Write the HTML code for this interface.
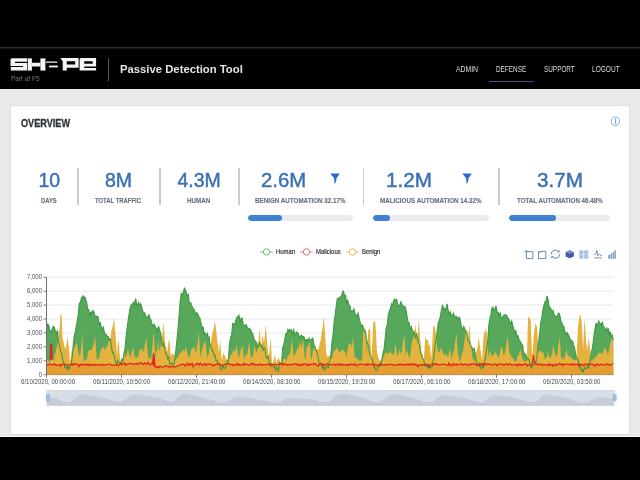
<!DOCTYPE html>
<html><head><meta charset="utf-8">
<style>
*{margin:0;padding:0;box-sizing:border-box}
html,body{width:640px;height:480px;overflow:hidden;background:#000;font-family:"Liberation Sans",sans-serif}
.a{position:absolute;white-space:nowrap;line-height:1}
#topline{position:absolute;left:0;top:47px;width:640px;height:1px;background:#2e2f33}
#topline2{position:absolute;left:0;top:48px;width:640px;height:1px;background:#161618}
#gray{position:absolute;left:0;top:89px;width:640px;height:348px;background:#e9e9e9}
#bline{position:absolute;left:0;top:436px;width:640px;height:1px;background:#f6f6f6}
#card{position:absolute;left:10px;top:105px;width:620px;height:330px;background:#fff;border:1px solid #dde1e8;border-radius:2px}
.num{color:#3b70b6;font-size:19.5px;-webkit-text-stroke:0.45px #3b70b6}
.lbl{color:#657080;font-size:6.6px;font-weight:bold;-webkit-text-stroke:0.12px #657080}
.div{position:absolute;top:168px;width:1.5px;height:36.5px;background:#cccccc}
.bar{position:absolute;top:215px;height:6px;border-radius:3px;background:#e9ecef;overflow:hidden}
.bar i{position:absolute;left:0;top:0;bottom:0;background:#3f80d2;border-radius:3px}
.nav{color:#dcdcdc;font-size:8.3px}
.ylab{color:#4c4f57;font-size:7px;text-align:right;width:30px;transform:scaleX(0.86);transform-origin:100% 0}
.xlab{color:#45484f;font-size:7.2px;transform:scaleX(0.846);transform-origin:0 0}
.leg{color:#262626;font-size:6.8px;-webkit-text-stroke:0.15px #262626;transform:scaleX(0.87);transform-origin:0 0}
</style></head><body><div id="wrap" style="position:absolute;left:0;top:0;width:640px;height:480px;filter:blur(0.3px)">
<div id="topline"></div><div id="topline2"></div>
<!-- header -->
<svg class="a" style="left:0;top:0" width="640" height="89">
  <g fill="#f4f4f4" id="logo">
<path d="M12 58.25H27.2V61.8H15V62.9H27.2V70.5H10.8V67H23V65.9H10.5V59.75Q10.5 58.25 12 58.25Z"/>
<rect x="27.8" y="58.4" width="4.1" height="12.2"/>
<rect x="31.9" y="62.75" width="8.5" height="3.75"/>
<rect x="40.4" y="58.4" width="5" height="12.2"/>
<rect x="46" y="61.5" width="11.25" height="1.25"/>
<rect x="49.1" y="65.6" width="8.8" height="1.8"/>
<path d="M60.2 58.1H78.6V67.75H66.75V70.6H62.7V61.2Q61.5 59.5 60.2 58.1Z M66.75 61.2V64.6H75.2V61.2Z" fill-rule="evenodd"/>
<path d="M81.2 58.1H96.1V66.5H84.25V68.1H96.1V70.6H79.6V59.7Q79.6 58.1 81.2 58.1Z M84.25 61.2V63.7H92.7V61.2Z" fill-rule="evenodd"/>
</g>
</svg>
<div class="a" style="left:11px;top:74.5px;font-size:7.4px;color:#7c7c7c;transform:scaleX(0.88);transform-origin:0 0">Part of F5</div>
<div class="a" style="left:108px;top:58px;width:1px;height:23px;background:#5a5a5a"></div>
<div class="a" style="left:120px;top:62.8px;font-size:11.6px;font-weight:bold;color:#e4e4e4;transform:scaleX(0.974);transform-origin:0 0">Passive Detection Tool</div>
<div class="a nav" style="left:456px;top:65px;transform:scaleX(0.825);transform-origin:0 0">ADMIN</div>
<div class="a nav" style="left:496.4px;top:65px;transform:scaleX(0.77);transform-origin:0 0">DEFENSE</div>
<div class="a nav" style="left:544px;top:65px;transform:scaleX(0.77);transform-origin:0 0">SUPPORT</div>
<div class="a nav" style="left:592.4px;top:65px;transform:scaleX(0.79);transform-origin:0 0">LOGOUT</div>
<div class="a" style="left:488.7px;top:80.5px;width:45.7px;height:1.8px;background:#44528a"></div>

<div id="gray"></div><div id="bline"></div>
<div id="card"></div>
<div class="a" style="left:21.3px;top:117.9px;font-size:10.5px;font-weight:bold;color:#2f343a;-webkit-text-stroke:0.3px #2f343a;transform:scaleX(0.87);transform-origin:0 0">OVERVIEW</div>
<svg class="a" style="left:609px;top:115px" width="13" height="13"><circle cx="6.4" cy="6.25" r="4.2" fill="none" stroke="#7aaee0" stroke-width="1"/><line x1="6.4" y1="3.6" x2="6.4" y2="9" stroke="#6a9fd8" stroke-width="1"/></svg>

<!-- KPIs -->
<div class="a num" style="left:38.5px;top:171px">10</div>
<div class="a lbl" style="left:41.4px;top:198px;transform:scaleX(0.89);transform-origin:0 0">DAYS</div>
<div class="div" style="left:77px"></div>
<div class="a num" style="left:105px;top:171px">8M</div>
<div class="a lbl" style="left:95.4px;top:198px;transform:scaleX(0.896);transform-origin:0 0">TOTAL TRAFFIC</div>
<div class="div" style="left:159px"></div>
<div class="a num" style="left:177.5px;top:171px">4.3M</div>
<div class="a lbl" style="left:187.2px;top:198px;transform:scaleX(0.944);transform-origin:0 0">HUMAN</div>
<div class="div" style="left:238px"></div>
<div class="a num" style="left:260.5px;top:171px;transform:scaleX(1.04);transform-origin:0 0">2.6M</div>
<div class="a lbl" style="left:255px;top:198px;transform:scaleX(0.948);transform-origin:0 0">BENIGN AUTOMATION 32.17%</div>
<div class="div" style="left:362.5px"></div>
<div class="a num" style="left:386px;top:171px;transform:scaleX(1.06);transform-origin:0 0">1.2M</div>
<div class="a lbl" style="left:379.5px;top:198px;transform:scaleX(0.95);transform-origin:0 0">MALICIOUS AUTOMATION 14.32%</div>
<div class="div" style="left:498.2px"></div>
<div class="a num" style="left:536.5px;top:171px;transform:scaleX(1.06);transform-origin:0 0">3.7M</div>
<div class="a lbl" style="left:516.5px;top:198px;transform:scaleX(0.94);transform-origin:0 0">TOTAL AUTOMATION 46.48%</div>
<svg class="a" style="left:330px;top:173px" width="11" height="12"><path d="M0.3 0.4H9.8L6.5 5.2L6.1 8.8L4.6 10.9L4.1 5.2Z" fill="#2d69cc"/></svg>
<svg class="a" style="left:462.4px;top:173px" width="11" height="12"><path d="M0.3 0.4H9.8L6.5 5.2L6.1 8.8L4.6 10.9L4.1 5.2Z" fill="#2d69cc"/></svg>
<div class="bar" style="left:248px;width:105px"><i style="width:34px"></i></div>
<div class="bar" style="left:373px;width:116px"><i style="width:16.5px"></i></div>
<div class="bar" style="left:508.5px;width:101px"><i style="width:47px"></i></div>

<!-- chart -->
<svg class="a" style="left:0;top:0" width="640" height="480" id="chart">
<line x1="46.5" y1="360.82" x2="613.5" y2="360.82" stroke="#e4e6e9" stroke-width="0.9"/>
<line x1="46.5" y1="346.89" x2="613.5" y2="346.89" stroke="#e4e6e9" stroke-width="0.9"/>
<line x1="46.5" y1="332.96" x2="613.5" y2="332.96" stroke="#e4e6e9" stroke-width="0.9"/>
<line x1="46.5" y1="319.03" x2="613.5" y2="319.03" stroke="#e4e6e9" stroke-width="0.9"/>
<line x1="46.5" y1="305.10" x2="613.5" y2="305.10" stroke="#e4e6e9" stroke-width="0.9"/>
<line x1="46.5" y1="291.17" x2="613.5" y2="291.17" stroke="#e4e6e9" stroke-width="0.9"/>
<line x1="46.5" y1="277.24" x2="613.5" y2="277.24" stroke="#e4e6e9" stroke-width="0.9"/>
<polygon points="46.50,374.75 46.50,321.68 47.30,325.60 48.10,324.56 49.15,326.67 50.20,331.31 51.23,332.59 52.25,328.81 53.27,326.37 54.30,327.61 55.35,330.58 56.40,334.08 57.50,330.24 58.50,342.08 59.55,346.48 60.60,351.37 61.65,353.82 62.70,359.36 63.73,362.29 64.77,367.28 65.80,366.55 66.83,368.83 67.87,365.48 68.90,369.36 69.95,367.01 71.00,364.66 72.00,359.31 73.10,346.49 74.15,336.93 75.20,332.17 76.22,326.85 77.25,320.78 78.28,314.53 79.30,302.90 80.35,302.75 81.40,297.69 82.25,299.18 83.10,296.00 84.15,296.78 85.20,297.73 86.60,301.96 87.70,309.55 88.72,309.62 89.75,316.45 90.78,312.22 91.80,313.60 92.60,310.53 93.40,311.31 94.20,312.76 95.00,316.05 96.00,316.55 97.00,316.19 98.05,317.07 99.10,324.32 100.15,322.56 101.20,326.47 102.25,329.47 103.30,327.21 104.20,331.33 105.10,334.41 106.00,334.24 107.15,336.18 108.30,336.54 109.35,339.39 110.40,338.90 111.45,346.67 112.50,353.06 113.53,352.80 114.57,357.62 115.60,361.86 116.65,364.66 117.70,360.31 118.75,362.58 119.80,363.29 120.85,363.15 121.90,358.88 122.95,361.75 124.00,353.54 125.00,348.85 126.00,338.19 127.05,328.93 128.10,320.89 129.15,313.87 130.20,307.56 131.23,304.75 132.27,304.72 133.30,302.59 134.14,308.41 134.98,301.07 135.82,298.51 136.66,305.79 137.50,304.46 138.53,302.46 139.57,305.77 140.60,303.72 141.65,306.62 142.70,311.08 143.75,313.31 144.80,312.74 145.85,317.68 146.90,317.05 147.93,316.63 148.97,314.84 150.00,318.02 151.00,320.32 152.00,323.92 153.07,326.24 154.13,324.32 155.20,326.56 156.04,328.36 156.88,328.33 157.72,332.79 158.56,325.98 159.40,329.94 160.45,332.08 161.50,338.43 162.53,346.80 163.57,342.47 164.60,348.51 165.63,353.04 166.67,354.73 167.70,359.03 168.73,357.16 169.77,364.71 170.80,363.85 171.87,362.66 172.93,365.32 174.00,364.45 175.00,355.93 176.00,349.51 177.05,339.17 178.10,328.03 179.15,315.23 180.20,301.14 181.25,293.52 182.30,295.22 183.35,292.03 184.40,288.30 185.43,289.75 186.47,293.47 187.50,296.06 188.34,294.50 189.18,302.84 190.02,302.68 190.86,302.95 191.70,305.90 192.52,306.91 193.34,309.72 194.16,309.25 194.98,312.58 195.80,314.36 196.64,312.52 197.48,313.92 198.32,314.78 199.16,317.68 200.00,318.41 200.84,322.30 201.68,325.36 202.52,328.30 203.36,327.60 204.20,334.33 205.02,332.94 205.84,334.57 206.66,335.06 207.48,333.50 208.30,339.01 209.14,337.28 209.98,344.82 210.82,344.90 211.66,349.87 212.50,350.25 213.33,352.42 214.17,355.81 215.00,355.15 216.03,360.90 217.07,360.52 218.10,364.01 219.15,363.98 220.20,368.02 221.25,369.99 222.08,367.57 222.91,365.90 223.74,368.05 224.57,368.72 225.40,367.42 226.43,363.08 227.47,360.76 228.50,358.82 229.55,343.96 230.60,337.41 231.65,334.99 232.70,323.59 233.75,323.51 234.80,325.01 235.85,320.06 236.90,317.36 237.95,316.39 239.00,315.21 240.03,323.16 241.07,318.29 242.10,318.17 243.15,323.97 244.20,325.55 245.23,325.46 246.27,324.60 247.30,327.73 248.14,328.59 248.98,328.44 249.82,328.93 250.66,329.52 251.50,332.04 252.53,333.23 253.57,337.20 254.60,340.43 255.63,341.20 256.67,342.72 257.70,347.71 258.54,346.41 259.38,342.79 260.22,344.64 261.06,346.77 261.90,345.15 262.93,350.31 263.97,347.63 265.00,349.40 266.03,356.97 267.07,358.31 268.10,356.28 269.15,361.55 270.20,366.05 271.25,363.50 272.08,364.40 272.91,365.39 273.74,366.87 274.57,366.49 275.40,369.89 276.43,367.03 277.47,368.86 278.50,371.93 279.57,362.92 280.63,363.82 281.70,361.52 282.73,347.66 283.75,344.96 284.77,339.51 285.80,333.67 286.85,333.77 287.90,329.37 288.74,331.07 289.58,329.87 290.42,330.55 291.26,329.52 292.10,335.51 292.93,331.31 293.76,329.51 294.59,335.52 295.42,335.03 296.25,331.88 297.30,332.40 298.35,333.63 299.40,338.74 300.43,335.78 301.47,335.06 302.50,338.00 303.34,336.31 304.18,337.14 305.02,341.33 305.86,339.72 306.70,340.86 307.52,339.29 308.34,340.94 309.16,338.18 309.98,340.33 310.80,340.49 311.85,338.77 312.90,338.17 313.95,344.72 315.00,346.58 315.84,350.45 316.68,350.67 317.52,355.30 318.36,358.62 319.20,363.78 320.02,364.14 320.84,362.96 321.66,366.40 322.48,363.96 323.30,368.83 324.14,367.09 324.98,369.56 325.82,367.89 326.66,367.05 327.50,366.36 328.33,367.28 329.17,362.21 330.00,360.65 331.05,352.94 332.10,340.89 333.15,334.42 334.20,321.10 335.23,314.25 336.25,306.12 337.27,298.64 338.30,298.31 339.37,297.41 340.43,296.87 341.50,296.53 342.50,291.89 343.50,291.17 344.55,296.43 345.60,295.44 346.65,303.78 347.70,299.85 348.75,305.49 349.80,305.38 350.85,310.77 351.90,311.27 352.93,310.64 353.97,308.89 355.00,313.75 356.03,314.82 357.07,315.93 358.10,313.22 359.15,318.24 360.20,322.53 361.23,325.87 362.27,325.03 363.30,327.78 364.35,331.88 365.40,331.46 366.45,340.02 367.50,343.26 368.53,346.40 369.57,353.11 370.60,356.14 371.65,358.13 372.70,361.02 373.75,365.52 374.80,367.64 375.85,370.53 376.90,370.26 377.72,367.33 378.54,364.74 379.36,366.49 380.18,365.50 381.00,365.64 382.05,358.36 383.10,352.76 384.15,348.43 385.20,338.18 386.23,327.87 387.27,324.97 388.30,315.18 389.37,310.86 390.43,308.50 391.50,303.80 392.53,305.34 393.57,300.92 394.60,299.15 395.63,300.11 396.67,299.19 397.70,303.95 398.73,306.22 399.77,305.58 400.80,301.32 401.87,305.31 402.93,305.37 404.00,307.96 405.03,306.69 406.07,310.15 407.10,316.84 408.13,322.32 409.17,322.88 410.20,330.17 411.23,326.49 412.27,330.24 413.30,331.98 414.37,332.07 415.43,337.12 416.50,333.91 417.53,337.88 418.57,342.65 419.60,345.90 420.65,353.14 421.70,354.21 422.73,358.92 423.77,359.86 424.80,365.92 425.83,364.87 426.87,366.80 427.90,364.62 428.74,368.62 429.58,365.65 430.42,368.12 431.26,366.98 432.10,366.63 433.13,361.46 434.17,353.78 435.20,345.15 436.25,338.80 437.30,330.53 438.33,322.42 439.37,320.23 440.40,316.27 441.45,309.81 442.50,305.42 443.33,307.44 444.17,310.01 445.00,308.29 446.05,309.05 447.10,303.80 448.15,310.36 449.20,314.48 450.23,311.78 451.27,316.15 452.30,316.01 453.33,313.16 454.37,316.15 455.40,316.52 456.24,316.43 457.08,319.31 457.92,317.44 458.76,319.44 459.60,317.70 460.63,322.00 461.67,328.70 462.70,328.78 463.73,326.49 464.77,329.06 465.80,331.99 466.87,331.97 467.93,339.66 469.00,340.52 470.03,343.27 471.07,346.30 472.10,347.71 473.13,349.60 474.17,348.64 475.20,354.20 476.23,360.48 477.27,364.11 478.30,365.25 479.37,363.17 480.43,367.03 481.50,368.77 482.53,364.53 483.57,367.82 484.60,361.39 485.65,357.25 486.70,348.95 487.73,341.21 488.75,325.62 489.77,319.06 490.80,315.60 491.85,308.53 492.90,307.28 493.93,309.65 494.97,309.64 496.00,306.00 497.07,312.17 498.13,312.21 499.20,316.80 500.23,312.30 501.27,318.08 502.30,318.46 503.33,315.92 504.37,314.77 505.40,315.23 506.43,314.95 507.47,317.34 508.50,318.30 509.57,321.39 510.63,323.78 511.70,320.90 512.73,326.05 513.77,328.68 514.80,333.03 515.83,330.87 516.87,336.70 517.90,335.56 518.93,339.42 519.97,341.01 521.00,343.21 521.80,344.13 522.60,345.00 523.40,351.73 524.20,353.74 525.23,353.55 526.27,356.21 527.30,358.90 528.33,358.88 529.37,361.40 530.40,366.37 531.43,367.72 532.47,365.83 533.50,364.83 534.30,362.74 535.10,361.79 535.90,362.43 536.70,359.38 537.73,348.30 538.75,340.50 539.77,332.86 540.80,322.36 541.85,317.83 542.90,309.96 543.95,305.46 545.00,301.71 546.05,300.83 547.10,295.75 548.15,300.25 549.20,307.09 550.23,307.71 551.27,309.66 552.30,312.23 553.15,310.41 554.00,314.60 554.85,315.13 555.70,317.48 556.60,316.42 557.50,316.10 558.40,313.08 559.30,313.71 560.20,317.07 561.10,321.38 562.00,323.11 562.90,327.40 563.77,326.14 564.63,331.80 565.50,332.05 566.40,335.22 567.30,332.82 568.20,334.61 569.10,336.12 570.00,339.77 570.90,339.45 571.80,342.10 572.70,341.23 573.60,345.67 574.50,347.52 575.40,352.94 576.30,357.91 577.20,358.79 578.10,359.35 579.00,367.32 579.90,363.22 580.80,369.70 581.70,371.08 582.60,369.58 583.50,371.83 584.40,367.44 585.30,368.64 586.17,368.02 587.05,368.19 587.92,366.05 588.80,368.51 589.70,360.98 590.60,357.66 591.50,352.21 592.40,348.24 593.30,341.69 594.20,333.97 595.10,328.22 596.00,323.18 596.90,326.22 597.80,323.74 598.70,321.01 599.60,323.09 600.50,323.74 601.40,324.85 602.30,321.54 603.20,326.16 604.10,327.12 605.00,329.13 605.90,330.01 606.80,328.11 607.70,331.09 608.60,329.12 609.50,335.70 610.37,331.60 611.23,336.72 612.10,335.10 613.30,340.45 613.30,374.75" fill="#57a85a"/>
<polygon points="46.50,374.75 46.00,362.70 46.70,360.68 47.40,359.66 48.10,360.34 48.88,361.54 49.65,362.79 50.43,359.85 51.20,359.37 52.25,359.51 53.30,359.32 54.00,361.34 54.70,353.31 55.40,354.17 56.10,348.65 56.80,348.16 57.50,342.73 58.50,335.18 59.50,329.54 60.40,315.32 61.50,314.02 62.50,337.68 63.70,342.65 64.75,347.53 65.80,348.47 66.65,343.46 67.50,336.29 68.50,344.77 69.25,352.96 70.00,363.50 70.90,357.36 71.80,350.87 72.70,350.39 73.60,350.21 74.50,347.62 75.40,344.88 76.30,343.04 77.20,345.09 78.10,350.49 79.00,355.20 79.90,355.92 80.65,350.99 81.40,346.86 82.20,332.08 83.40,358.61 84.30,363.10 85.20,359.81 86.10,359.45 87.00,359.00 87.90,353.21 88.80,349.60 89.70,350.16 90.60,350.02 91.50,350.38 92.50,347.21 93.50,344.98 94.30,340.97 95.10,335.87 96.00,348.68 96.90,360.82 97.80,357.39 98.70,359.75 99.60,355.06 100.50,351.37 101.40,348.96 102.30,347.52 103.17,346.85 104.03,348.26 104.90,350.69 105.80,347.73 106.70,345.68 107.60,345.91 108.50,341.61 109.40,340.59 110.30,340.91 111.20,331.78 112.10,327.99 113.00,325.24 113.90,317.41 114.80,327.45 115.70,335.72 117.00,354.74 117.70,346.21 118.40,338.65 119.30,348.41 120.20,361.44 121.10,360.58 122.00,363.50 122.90,360.47 123.80,351.01 125.00,355.86 125.90,357.00 126.80,353.71 127.70,349.14 128.60,351.95 129.50,354.76 130.40,359.12 131.30,353.51 132.20,349.99 133.10,348.12 134.00,352.76 134.90,359.11 135.77,355.50 136.63,358.67 137.50,356.34 138.22,357.12 138.94,353.02 139.66,348.87 140.38,350.30 141.10,349.96 142.00,346.92 142.90,350.86 143.80,352.33 144.70,345.19 145.60,341.66 146.50,336.52 147.40,350.08 148.30,358.99 149.20,357.24 150.10,357.80 151.00,360.17 151.90,351.71 152.80,341.11 153.70,331.15 154.60,345.83 155.50,358.27 156.40,349.67 157.30,350.54 158.20,339.95 159.05,348.87 159.90,351.38 160.80,344.53 161.70,340.75 162.60,331.60 163.50,322.83 164.40,332.95 165.30,345.84 166.20,346.67 167.10,352.71 168.00,346.34 168.90,338.53 169.80,343.14 170.70,355.51 171.60,355.46 172.50,353.04 173.40,354.08 174.30,355.89 175.20,361.14 176.10,357.04 177.00,359.13 177.90,357.24 178.80,355.52 179.70,353.82 180.57,352.52 181.43,352.21 182.30,350.10 183.20,349.69 184.10,351.30 185.00,351.33 185.70,346.00 186.40,348.85 187.10,351.98 187.80,354.35 188.50,357.47 189.22,357.61 189.95,356.21 190.68,351.76 191.40,349.05 192.33,348.28 193.27,348.46 194.20,346.28 195.15,350.08 196.10,353.96 196.93,346.31 197.77,341.27 198.60,331.73 199.55,342.90 200.50,358.01 201.23,354.10 201.97,349.25 202.70,346.96 203.42,345.20 204.15,342.74 204.88,343.21 205.60,339.81 206.55,351.93 207.50,358.96 208.20,355.06 208.90,352.90 209.60,346.90 210.30,345.37 211.25,339.38 212.20,334.27 212.92,331.08 213.65,329.59 214.38,323.76 215.10,321.99 216.05,329.27 217.00,338.20 217.95,345.35 218.90,352.03 220.20,339.22 220.95,351.97 221.70,360.64 222.47,356.25 223.23,352.96 224.00,353.86 224.80,355.70 225.60,357.56 226.40,358.86 227.35,363.10 228.30,363.50 229.25,358.77 230.20,356.87 230.92,354.00 231.65,355.23 232.38,352.86 233.10,349.96 234.05,351.07 235.00,351.66 235.85,347.11 236.70,345.52 237.55,351.85 238.40,357.69 239.25,356.34 240.10,351.56 240.93,349.66 241.77,347.57 242.60,344.88 243.45,354.15 244.30,359.67 245.13,355.49 245.97,352.96 246.80,356.00 247.63,352.62 248.47,346.05 249.30,341.92 250.15,350.76 251.00,358.74 251.85,355.67 252.70,358.58 253.55,350.92 254.40,345.22 255.23,348.39 256.07,352.26 256.90,353.46 257.77,344.02 258.63,340.80 259.50,328.84 260.35,336.62 261.20,347.41 262.00,339.36 262.80,334.56 264.00,343.04 264.85,335.07 265.70,324.40 266.55,334.86 267.40,346.05 268.70,357.05 269.55,349.68 270.40,336.43 271.25,347.84 272.10,363.50 272.97,362.18 273.83,360.05 274.70,354.24 275.50,358.52 276.30,363.50 277.17,360.26 278.03,360.11 278.90,357.09 279.75,360.62 280.60,363.50 281.43,363.22 282.27,361.40 283.10,358.21 283.80,359.89 284.50,358.12 285.20,358.77 285.90,360.61 286.60,360.41 287.40,356.96 288.20,355.77 289.00,354.54 289.80,354.18 290.60,349.66 291.40,343.31 292.20,338.88 292.95,348.13 293.70,358.84 294.50,354.99 295.30,353.22 296.10,353.37 296.90,349.86 297.70,347.60 298.50,349.29 299.25,344.22 300.00,341.43 300.80,345.45 301.60,348.01 302.40,342.32 303.20,339.55 304.00,347.94 304.80,359.24 305.60,358.59 306.40,349.45 307.20,346.80 308.00,345.38 308.80,345.32 309.60,340.57 310.35,350.82 311.10,360.14 311.90,357.46 312.70,353.00 313.50,348.14 314.30,348.26 315.10,348.49 315.90,351.73 316.70,348.23 317.50,348.63 318.30,350.05 319.07,346.66 319.83,342.83 320.60,340.38 321.40,334.59 322.20,329.95 323.00,324.67 323.80,316.87 325.00,333.75 326.20,352.60 327.10,356.90 328.00,355.52 328.76,355.88 329.52,356.60 330.28,356.71 331.04,357.58 331.80,358.92 332.50,355.99 333.20,352.72 333.90,350.69 334.60,351.31 335.33,349.96 336.05,348.61 336.77,348.10 337.50,347.99 338.20,351.63 338.90,350.01 339.60,352.84 340.30,352.11 341.02,351.61 341.75,349.28 342.48,350.27 343.20,349.73 343.90,351.48 344.60,352.34 345.30,351.32 346.00,358.38 346.95,352.56 347.90,348.71 348.85,343.45 349.80,343.84 350.75,344.07 351.70,347.46 353.00,336.24 353.75,347.67 354.50,356.87 355.45,357.81 356.40,357.54 357.12,359.75 357.85,358.36 358.57,361.47 359.30,360.34 360.00,359.97 360.70,359.53 361.40,362.58 362.10,359.93 362.80,340.41 363.50,326.98 364.30,327.14 365.10,330.67 365.90,327.71 366.90,354.57 368.20,330.62 369.15,328.79 370.10,328.59 371.20,360.53 372.40,340.72 373.10,324.31 373.87,320.65 374.63,322.05 375.40,322.38 376.15,335.86 376.90,350.92 377.67,354.14 378.43,358.18 379.20,359.42 379.90,360.38 380.60,359.81 381.30,363.50 382.00,362.00 382.75,360.09 383.50,356.32 384.25,356.88 385.00,351.80 385.90,353.99 386.80,352.48 387.70,352.94 388.60,353.88 389.50,352.15 390.40,350.59 391.12,353.58 391.84,353.24 392.56,353.76 393.28,355.00 394.00,355.48 395.40,343.56 396.30,349.13 397.20,356.69 397.90,353.84 398.60,353.43 399.30,349.11 400.20,351.72 401.10,354.75 402.00,351.56 402.90,340.24 403.65,338.69 404.40,335.12 405.60,356.82 406.50,351.35 407.40,350.49 408.30,354.82 409.20,358.20 410.10,356.10 411.00,349.24 411.77,342.82 412.53,339.82 413.30,338.71 414.03,334.93 414.77,328.88 415.50,324.29 416.90,344.93 417.80,332.80 418.70,319.71 419.90,335.86 420.80,345.62 421.70,355.17 422.60,357.93 423.50,360.84 424.40,351.09 425.30,336.41 426.60,340.50 428.00,339.70 428.90,346.37 429.80,343.92 431.20,359.55 432.00,346.68 432.80,335.38 433.40,325.34 434.30,326.58 435.20,327.83 436.10,335.08 437.00,345.56 437.90,350.44 438.80,352.83 439.70,351.61 440.60,348.26 441.50,348.27 442.20,350.76 442.90,352.59 443.60,353.79 444.30,356.00 445.00,353.12 445.73,355.17 446.47,354.43 447.20,356.43 448.10,356.75 449.00,353.00 449.90,348.90 450.75,352.21 451.60,360.98 452.50,354.04 453.40,352.11 454.30,348.39 455.03,342.44 455.77,337.41 456.50,332.90 457.90,354.86 458.80,356.64 459.70,361.50 460.60,360.37 461.50,354.26 462.40,353.24 463.30,349.42 464.20,342.97 465.10,337.39 466.50,328.24 467.80,342.28 468.70,332.99 469.60,324.66 470.80,344.78 471.55,349.63 472.30,356.42 473.17,360.81 474.03,357.97 474.90,363.50 475.80,353.80 476.70,349.91 477.60,347.52 478.50,336.43 479.40,342.95 480.30,348.68 481.20,353.76 482.10,360.74 483.00,344.14 483.90,331.72 484.80,333.40 485.70,327.68 487.00,334.51 488.40,357.33 489.30,352.62 490.20,349.21 491.10,357.10 492.00,354.71 492.90,355.93 493.80,354.09 494.70,353.27 495.60,351.42 496.47,353.69 497.33,355.14 498.20,358.38 499.10,355.93 500.00,352.69 500.90,347.91 501.80,347.26 502.53,348.56 503.27,354.66 504.00,354.94 504.90,352.82 505.80,347.72 506.85,340.79 507.90,336.68 508.80,346.67 509.70,354.06 510.47,355.04 511.23,356.06 512.00,359.00 512.90,357.14 513.80,359.07 514.70,362.45 515.60,361.34 516.50,360.98 517.40,356.52 518.30,355.75 519.20,353.19 520.10,349.50 521.00,352.52 521.90,356.26 522.80,359.49 523.70,360.82 524.60,362.26 525.37,360.71 526.13,361.11 526.90,361.15 527.60,330.77 528.20,316.67 529.07,317.55 529.93,318.01 530.80,321.65 531.55,342.08 532.30,359.50 533.50,338.85 534.40,329.21 535.30,323.32 536.20,324.77 537.10,327.43 538.40,353.07 539.17,351.67 539.93,350.75 540.70,350.53 541.60,351.58 542.50,353.26 543.40,351.96 544.30,356.68 545.20,359.96 546.10,356.83 547.00,357.83 547.90,350.78 548.80,355.60 549.70,358.18 550.60,357.87 551.47,355.19 552.33,352.17 553.20,344.14 554.10,349.84 555.00,353.54 555.70,355.95 556.60,356.27 557.50,354.33 558.20,346.03 558.90,342.51 559.60,336.74 560.35,346.36 561.10,359.75 562.00,357.22 562.90,357.27 563.80,360.99 564.67,356.53 565.53,353.67 566.40,348.82 567.30,353.62 568.20,356.48 569.10,356.36 570.00,355.34 570.90,357.94 571.80,358.46 572.70,359.35 573.60,360.65 574.50,359.24 575.40,360.51 576.30,359.50 577.20,343.14 578.10,325.62 579.50,316.16 580.23,314.34 580.97,317.12 581.70,321.76 583.10,349.79 584.40,318.45 585.80,335.86 587.00,351.01 587.90,344.77 588.80,337.38 589.55,345.16 590.30,349.68 591.50,362.87 592.40,358.60 593.30,361.71 594.20,358.21 595.10,357.77 596.00,355.70 596.90,357.74 597.80,353.59 598.70,353.57 599.60,353.05 600.50,353.12 601.40,353.01 602.30,354.92 603.20,351.77 604.10,349.27 605.00,347.32 605.90,350.06 606.80,350.44 607.70,354.96 608.57,352.65 609.43,347.27 610.30,343.95 611.20,339.75 612.10,336.22 613.30,344.82 613.30,374.75" fill="#e6b23e"/>
<polygon points="46.50,374.75 46.50,363.87 47.40,364.83 48.30,365.20 49.20,364.29 50.10,363.80 51.00,364.56 51.90,364.89 52.80,365.26 53.70,363.87 54.60,363.82 55.50,365.02 56.40,364.88 57.30,365.52 58.20,365.19 59.10,364.54 60.00,364.44 60.90,366.14 61.80,364.43 62.70,364.13 63.60,363.92 64.50,364.66 65.40,364.69 66.30,364.39 67.20,364.56 68.10,364.76 69.00,365.02 69.90,365.26 70.80,364.73 71.70,363.53 72.60,365.02 73.50,363.75 74.40,364.50 75.30,363.72 76.20,364.60 77.10,364.13 78.00,364.73 78.90,366.58 79.80,364.57 80.70,365.11 81.60,363.81 82.50,364.43 83.40,365.00 84.30,364.54 85.20,364.82 86.10,364.66 87.00,364.00 87.90,364.94 88.80,364.11 89.70,365.72 90.60,364.30 91.50,365.01 92.40,364.60 93.30,365.17 94.20,364.24 95.10,365.20 96.00,364.53 96.90,365.36 97.80,364.97 98.70,364.68 99.60,364.13 100.50,365.06 101.40,364.88 102.30,365.59 103.20,364.37 104.10,364.93 105.00,364.90 105.90,364.77 106.80,364.73 107.70,364.71 108.60,364.24 109.50,363.99 110.40,364.36 111.30,364.95 112.20,365.51 113.10,365.19 114.00,365.23 114.90,365.07 115.80,365.02 116.70,364.71 117.60,365.06 118.50,365.66 119.40,364.40 120.30,363.18 121.20,364.78 122.10,363.75 123.00,364.18 123.90,364.12 124.80,362.92 125.70,365.06 126.60,364.67 127.50,363.71 128.40,364.05 129.30,363.68 130.20,363.07 131.10,363.53 132.00,363.82 132.90,364.27 133.80,364.03 134.70,363.64 135.60,364.41 136.50,363.14 137.40,364.08 138.30,364.27 139.20,363.42 140.10,362.53 141.00,363.06 141.90,363.74 142.80,363.92 143.70,364.53 144.60,363.00 145.50,363.60 146.40,363.99 147.30,363.51 148.20,362.18 149.10,364.08 150.00,364.99 150.90,364.20 151.80,363.05 152.70,364.35 153.60,364.73 154.50,366.09 155.40,366.97 156.30,366.67 157.20,367.53 158.10,366.55 159.00,367.72 159.90,366.19 160.80,366.32 161.70,367.03 162.60,367.45 163.50,366.99 164.40,366.78 165.30,365.51 166.20,366.17 167.10,366.23 168.00,366.28 168.90,366.95 169.80,366.40 170.70,367.07 171.60,366.65 172.50,366.40 173.40,366.67 174.30,366.86 175.20,367.11 176.10,366.31 177.00,366.46 177.90,365.78 178.80,365.56 179.70,365.47 180.60,364.49 181.50,364.31 182.40,363.86 183.30,364.70 184.20,364.72 185.10,365.91 186.00,364.75 186.90,364.13 187.80,363.13 188.70,365.45 189.60,364.71 190.50,363.63 191.40,364.71 192.30,363.63 193.20,366.69 194.10,365.27 195.00,364.94 195.90,364.49 196.80,363.32 197.70,364.52 198.60,363.67 199.50,364.96 200.40,363.32 201.30,364.06 202.20,365.33 203.10,365.59 204.00,363.89 204.90,363.68 205.80,365.13 206.70,365.11 207.60,364.01 208.50,364.18 209.40,364.18 210.30,363.89 211.20,364.19 212.10,365.35 213.00,365.01 213.90,365.83 214.80,364.55 215.70,364.52 216.60,364.01 217.50,364.53 218.40,363.81 219.30,363.53 220.20,365.02 221.10,365.46 222.00,365.10 222.90,365.40 223.80,364.75 224.70,364.17 225.60,364.65 226.50,364.38 227.40,363.93 228.30,363.58 229.20,363.71 230.10,364.60 231.00,364.69 231.90,364.32 232.80,365.46 233.70,364.71 234.60,364.95 235.50,365.33 236.40,364.11 237.30,363.42 238.20,365.05 239.10,364.19 240.00,365.39 240.90,364.80 241.80,365.20 242.70,365.06 243.60,363.35 244.50,365.03 245.40,364.20 246.30,364.15 247.20,364.34 248.10,365.06 249.00,365.13 249.90,365.21 250.80,363.60 251.70,364.25 252.60,363.17 253.50,364.54 254.40,364.96 255.30,364.14 256.20,364.75 257.10,364.74 258.00,365.20 258.90,364.11 259.80,364.10 260.70,364.14 261.60,365.65 262.50,365.25 263.40,364.53 264.30,364.74 265.20,364.67 266.10,364.72 267.00,364.47 267.90,364.40 268.80,363.85 269.70,364.21 270.60,365.59 271.50,364.92 272.40,364.64 273.30,364.47 274.20,364.64 275.10,364.81 276.00,364.21 276.90,364.72 277.80,364.74 278.70,364.15 279.60,364.13 280.50,364.00 281.40,363.96 282.30,365.13 283.20,363.18 284.10,364.44 285.00,364.23 285.90,364.23 286.80,364.66 287.70,365.28 288.60,364.65 289.50,364.52 290.40,364.23 291.30,364.52 292.20,365.15 293.10,364.36 294.00,363.91 294.90,363.84 295.80,363.94 296.70,363.77 297.60,365.26 298.50,364.81 299.40,364.46 300.30,365.48 301.20,364.21 302.10,365.05 303.00,365.08 303.90,363.67 304.80,363.67 305.70,364.04 306.60,365.14 307.50,365.38 308.40,363.86 309.30,365.23 310.20,364.37 311.10,364.36 312.00,364.27 312.90,364.41 313.80,363.51 314.70,364.00 315.60,363.86 316.50,364.89 317.40,365.85 318.30,366.24 319.20,364.40 320.10,363.57 321.00,364.36 321.90,364.04 322.80,365.79 323.70,364.94 324.60,364.16 325.50,365.16 326.40,364.92 327.30,363.62 328.20,364.28 329.10,364.46 330.00,364.61 330.90,364.68 331.80,364.40 332.70,364.71 333.60,364.25 334.50,364.06 335.40,365.51 336.30,364.82 337.20,364.86 338.10,363.64 339.00,364.50 339.90,365.09 340.80,363.83 341.70,365.26 342.60,364.37 343.50,364.84 344.40,364.52 345.30,364.73 346.20,365.32 347.10,364.36 348.00,365.54 348.90,364.13 349.80,364.04 350.70,365.03 351.60,363.96 352.50,364.38 353.40,365.14 354.30,365.33 355.20,363.54 356.10,364.90 357.00,365.73 357.90,365.32 358.80,364.46 359.70,364.24 360.60,364.42 361.50,363.91 362.40,364.44 363.30,364.49 364.20,364.51 365.10,365.31 366.00,364.46 366.90,363.73 367.80,365.23 368.70,363.96 369.60,364.33 370.50,364.52 371.40,364.39 372.30,364.00 373.20,364.45 374.10,365.91 375.00,364.24 375.90,364.52 376.80,365.27 377.70,365.05 378.60,365.06 379.50,365.12 380.40,363.42 381.30,364.08 382.20,364.68 383.10,364.90 384.00,365.38 384.90,364.88 385.80,364.46 386.70,364.62 387.60,364.47 388.50,364.75 389.40,365.00 390.30,364.40 391.20,364.11 392.10,364.09 393.00,365.26 393.90,365.37 394.80,365.20 395.70,365.11 396.60,365.10 397.50,364.60 398.40,365.00 399.30,363.97 400.20,364.48 401.10,364.16 402.00,365.04 402.90,364.25 403.80,364.54 404.70,364.84 405.60,365.41 406.50,364.12 407.40,364.04 408.30,365.09 409.20,363.94 410.10,364.87 411.00,364.26 411.90,364.54 412.80,363.51 413.70,365.03 414.60,364.30 415.50,364.06 416.40,365.85 417.30,365.03 418.20,366.71 419.10,364.84 420.00,364.39 420.90,364.66 421.80,365.56 422.70,364.58 423.60,364.87 424.50,364.91 425.40,364.05 426.30,364.68 427.20,364.30 428.10,364.64 429.00,367.00 429.90,365.50 430.80,364.64 431.70,364.06 432.60,363.40 433.50,364.89 434.40,364.54 435.30,363.59 436.20,364.56 437.10,363.69 438.00,364.58 438.90,364.69 439.80,364.81 440.70,364.73 441.60,364.70 442.50,363.92 443.40,364.37 444.30,364.29 445.20,364.46 446.10,364.76 447.00,364.97 447.90,365.58 448.80,363.06 449.70,364.84 450.60,364.48 451.50,365.97 452.40,365.16 453.30,363.61 454.20,364.84 455.10,364.29 456.00,365.20 456.90,363.97 457.80,364.54 458.70,364.52 459.60,364.54 460.50,364.25 461.40,363.50 462.30,364.88 463.20,365.20 464.10,364.56 465.00,363.99 465.90,364.72 466.80,364.94 467.70,364.49 468.60,364.59 469.50,365.45 470.40,363.93 471.30,364.27 472.20,363.46 473.10,364.18 474.00,364.16 474.90,364.02 475.80,364.18 476.70,365.68 477.60,364.48 478.50,364.53 479.40,365.92 480.30,364.56 481.20,363.56 482.10,364.84 483.00,364.04 483.90,365.58 484.80,363.85 485.70,364.25 486.60,363.64 487.50,364.66 488.40,363.99 489.30,364.56 490.20,364.37 491.10,364.23 492.00,365.17 492.90,365.16 493.80,364.64 494.70,364.06 495.60,363.96 496.50,364.76 497.40,366.03 498.30,364.33 499.20,364.13 500.10,364.18 501.00,363.94 501.90,364.02 502.80,364.48 503.70,365.46 504.60,364.60 505.50,364.29 506.40,363.63 507.30,364.73 508.20,364.58 509.10,363.86 510.00,363.95 510.90,364.57 511.80,365.21 512.70,364.98 513.60,364.72 514.50,364.41 515.40,364.79 516.30,364.59 517.20,365.90 518.10,363.92 519.00,364.38 519.90,365.36 520.80,364.44 521.70,365.45 522.60,364.57 523.50,364.69 524.40,364.38 525.30,363.77 526.20,364.02 527.10,365.93 528.00,364.99 528.90,364.96 529.80,365.17 530.70,364.94 531.60,365.21 532.50,362.70 533.40,354.87 534.30,361.46 535.20,364.39 536.10,363.80 537.00,364.46 537.90,364.27 538.80,364.97 539.70,364.17 540.60,363.96 541.50,364.40 542.40,365.53 543.30,364.57 544.20,364.70 545.10,364.61 546.00,364.78 546.90,365.16 547.80,365.44 548.70,363.61 549.60,365.42 550.50,364.60 551.40,364.41 552.30,366.04 553.20,364.50 554.10,365.77 555.00,365.18 555.90,363.98 556.80,364.89 557.70,365.04 558.60,364.52 559.50,363.20 560.40,364.39 561.30,364.49 562.20,363.94 563.10,365.70 564.00,364.45 564.90,364.36 565.80,364.42 566.70,364.13 567.60,364.13 568.50,364.66 569.40,364.79 570.30,364.30 571.20,364.55 572.10,363.77 573.00,364.91 573.90,364.15 574.80,364.73 575.70,364.06 576.60,364.29 577.50,364.73 578.40,363.87 579.30,366.08 580.20,364.58 581.10,364.56 582.00,364.16 582.90,365.56 583.80,365.43 584.70,364.78 585.60,363.78 586.50,364.30 587.40,364.97 588.30,364.29 589.20,363.89 590.10,363.89 591.00,364.14 591.90,364.61 592.80,364.21 593.70,364.61 594.60,366.28 595.50,365.66 596.40,363.98 597.30,364.81 598.20,364.65 599.10,364.52 600.00,365.23 600.90,364.40 601.80,364.40 602.70,364.38 603.60,364.54 604.50,365.37 605.40,365.07 606.30,363.80 607.20,364.33 608.10,364.12 609.00,365.09 609.90,364.73 610.80,365.13 611.70,364.56 612.60,363.45 613.30,374.75" fill="#e59d32"/>
<polyline points="46.50,321.68 47.30,325.60 48.10,324.56 49.15,326.67 50.20,331.31 51.23,332.59 52.25,328.81 53.27,326.37 54.30,327.61 55.35,330.58 56.40,334.08 57.50,330.24 58.50,342.08 59.55,346.48 60.60,351.37 61.65,353.82 62.70,359.36 63.73,362.29 64.77,367.28 65.80,366.55 66.83,368.83 67.87,365.48 68.90,369.36 69.95,367.01 71.00,364.66 72.00,359.31 73.10,346.49 74.15,336.93 75.20,332.17 76.22,326.85 77.25,320.78 78.28,314.53 79.30,302.90 80.35,302.75 81.40,297.69 82.25,299.18 83.10,296.00 84.15,296.78 85.20,297.73 86.60,301.96 87.70,309.55 88.72,309.62 89.75,316.45 90.78,312.22 91.80,313.60 92.60,310.53 93.40,311.31 94.20,312.76 95.00,316.05 96.00,316.55 97.00,316.19 98.05,317.07 99.10,324.32 100.15,322.56 101.20,326.47 102.25,329.47 103.30,327.21 104.20,331.33 105.10,334.41 106.00,334.24 107.15,336.18 108.30,336.54 109.35,339.39 110.40,338.90 111.45,346.67 112.50,353.06 113.53,352.80 114.57,357.62 115.60,361.86 116.65,364.66 117.70,360.31 118.75,362.58 119.80,363.29 120.85,363.15 121.90,358.88 122.95,361.75 124.00,353.54 125.00,348.85 126.00,338.19 127.05,328.93 128.10,320.89 129.15,313.87 130.20,307.56 131.23,304.75 132.27,304.72 133.30,302.59 134.14,308.41 134.98,301.07 135.82,298.51 136.66,305.79 137.50,304.46 138.53,302.46 139.57,305.77 140.60,303.72 141.65,306.62 142.70,311.08 143.75,313.31 144.80,312.74 145.85,317.68 146.90,317.05 147.93,316.63 148.97,314.84 150.00,318.02 151.00,320.32 152.00,323.92 153.07,326.24 154.13,324.32 155.20,326.56 156.04,328.36 156.88,328.33 157.72,332.79 158.56,325.98 159.40,329.94 160.45,332.08 161.50,338.43 162.53,346.80 163.57,342.47 164.60,348.51 165.63,353.04 166.67,354.73 167.70,359.03 168.73,357.16 169.77,364.71 170.80,363.85 171.87,362.66 172.93,365.32 174.00,364.45 175.00,355.93 176.00,349.51 177.05,339.17 178.10,328.03 179.15,315.23 180.20,301.14 181.25,293.52 182.30,295.22 183.35,292.03 184.40,288.30 185.43,289.75 186.47,293.47 187.50,296.06 188.34,294.50 189.18,302.84 190.02,302.68 190.86,302.95 191.70,305.90 192.52,306.91 193.34,309.72 194.16,309.25 194.98,312.58 195.80,314.36 196.64,312.52 197.48,313.92 198.32,314.78 199.16,317.68 200.00,318.41 200.84,322.30 201.68,325.36 202.52,328.30 203.36,327.60 204.20,334.33 205.02,332.94 205.84,334.57 206.66,335.06 207.48,333.50 208.30,339.01 209.14,337.28 209.98,344.82 210.82,344.90 211.66,349.87 212.50,350.25 213.33,352.42 214.17,355.81 215.00,355.15 216.03,360.90 217.07,360.52 218.10,364.01 219.15,363.98 220.20,368.02 221.25,369.99 222.08,367.57 222.91,365.90 223.74,368.05 224.57,368.72 225.40,367.42 226.43,363.08 227.47,360.76 228.50,358.82 229.55,343.96 230.60,337.41 231.65,334.99 232.70,323.59 233.75,323.51 234.80,325.01 235.85,320.06 236.90,317.36 237.95,316.39 239.00,315.21 240.03,323.16 241.07,318.29 242.10,318.17 243.15,323.97 244.20,325.55 245.23,325.46 246.27,324.60 247.30,327.73 248.14,328.59 248.98,328.44 249.82,328.93 250.66,329.52 251.50,332.04 252.53,333.23 253.57,337.20 254.60,340.43 255.63,341.20 256.67,342.72 257.70,347.71 258.54,346.41 259.38,342.79 260.22,344.64 261.06,346.77 261.90,345.15 262.93,350.31 263.97,347.63 265.00,349.40 266.03,356.97 267.07,358.31 268.10,356.28 269.15,361.55 270.20,366.05 271.25,363.50 272.08,364.40 272.91,365.39 273.74,366.87 274.57,366.49 275.40,369.89 276.43,367.03 277.47,368.86 278.50,371.93 279.57,362.92 280.63,363.82 281.70,361.52 282.73,347.66 283.75,344.96 284.77,339.51 285.80,333.67 286.85,333.77 287.90,329.37 288.74,331.07 289.58,329.87 290.42,330.55 291.26,329.52 292.10,335.51 292.93,331.31 293.76,329.51 294.59,335.52 295.42,335.03 296.25,331.88 297.30,332.40 298.35,333.63 299.40,338.74 300.43,335.78 301.47,335.06 302.50,338.00 303.34,336.31 304.18,337.14 305.02,341.33 305.86,339.72 306.70,340.86 307.52,339.29 308.34,340.94 309.16,338.18 309.98,340.33 310.80,340.49 311.85,338.77 312.90,338.17 313.95,344.72 315.00,346.58 315.84,350.45 316.68,350.67 317.52,355.30 318.36,358.62 319.20,363.78 320.02,364.14 320.84,362.96 321.66,366.40 322.48,363.96 323.30,368.83 324.14,367.09 324.98,369.56 325.82,367.89 326.66,367.05 327.50,366.36 328.33,367.28 329.17,362.21 330.00,360.65 331.05,352.94 332.10,340.89 333.15,334.42 334.20,321.10 335.23,314.25 336.25,306.12 337.27,298.64 338.30,298.31 339.37,297.41 340.43,296.87 341.50,296.53 342.50,291.89 343.50,291.17 344.55,296.43 345.60,295.44 346.65,303.78 347.70,299.85 348.75,305.49 349.80,305.38 350.85,310.77 351.90,311.27 352.93,310.64 353.97,308.89 355.00,313.75 356.03,314.82 357.07,315.93 358.10,313.22 359.15,318.24 360.20,322.53 361.23,325.87 362.27,325.03 363.30,327.78 364.35,331.88 365.40,331.46 366.45,340.02 367.50,343.26 368.53,346.40 369.57,353.11 370.60,356.14 371.65,358.13 372.70,361.02 373.75,365.52 374.80,367.64 375.85,370.53 376.90,370.26 377.72,367.33 378.54,364.74 379.36,366.49 380.18,365.50 381.00,365.64 382.05,358.36 383.10,352.76 384.15,348.43 385.20,338.18 386.23,327.87 387.27,324.97 388.30,315.18 389.37,310.86 390.43,308.50 391.50,303.80 392.53,305.34 393.57,300.92 394.60,299.15 395.63,300.11 396.67,299.19 397.70,303.95 398.73,306.22 399.77,305.58 400.80,301.32 401.87,305.31 402.93,305.37 404.00,307.96 405.03,306.69 406.07,310.15 407.10,316.84 408.13,322.32 409.17,322.88 410.20,330.17 411.23,326.49 412.27,330.24 413.30,331.98 414.37,332.07 415.43,337.12 416.50,333.91 417.53,337.88 418.57,342.65 419.60,345.90 420.65,353.14 421.70,354.21 422.73,358.92 423.77,359.86 424.80,365.92 425.83,364.87 426.87,366.80 427.90,364.62 428.74,368.62 429.58,365.65 430.42,368.12 431.26,366.98 432.10,366.63 433.13,361.46 434.17,353.78 435.20,345.15 436.25,338.80 437.30,330.53 438.33,322.42 439.37,320.23 440.40,316.27 441.45,309.81 442.50,305.42 443.33,307.44 444.17,310.01 445.00,308.29 446.05,309.05 447.10,303.80 448.15,310.36 449.20,314.48 450.23,311.78 451.27,316.15 452.30,316.01 453.33,313.16 454.37,316.15 455.40,316.52 456.24,316.43 457.08,319.31 457.92,317.44 458.76,319.44 459.60,317.70 460.63,322.00 461.67,328.70 462.70,328.78 463.73,326.49 464.77,329.06 465.80,331.99 466.87,331.97 467.93,339.66 469.00,340.52 470.03,343.27 471.07,346.30 472.10,347.71 473.13,349.60 474.17,348.64 475.20,354.20 476.23,360.48 477.27,364.11 478.30,365.25 479.37,363.17 480.43,367.03 481.50,368.77 482.53,364.53 483.57,367.82 484.60,361.39 485.65,357.25 486.70,348.95 487.73,341.21 488.75,325.62 489.77,319.06 490.80,315.60 491.85,308.53 492.90,307.28 493.93,309.65 494.97,309.64 496.00,306.00 497.07,312.17 498.13,312.21 499.20,316.80 500.23,312.30 501.27,318.08 502.30,318.46 503.33,315.92 504.37,314.77 505.40,315.23 506.43,314.95 507.47,317.34 508.50,318.30 509.57,321.39 510.63,323.78 511.70,320.90 512.73,326.05 513.77,328.68 514.80,333.03 515.83,330.87 516.87,336.70 517.90,335.56 518.93,339.42 519.97,341.01 521.00,343.21 521.80,344.13 522.60,345.00 523.40,351.73 524.20,353.74 525.23,353.55 526.27,356.21 527.30,358.90 528.33,358.88 529.37,361.40 530.40,366.37 531.43,367.72 532.47,365.83 533.50,364.83 534.30,362.74 535.10,361.79 535.90,362.43 536.70,359.38 537.73,348.30 538.75,340.50 539.77,332.86 540.80,322.36 541.85,317.83 542.90,309.96 543.95,305.46 545.00,301.71 546.05,300.83 547.10,295.75 548.15,300.25 549.20,307.09 550.23,307.71 551.27,309.66 552.30,312.23 553.15,310.41 554.00,314.60 554.85,315.13 555.70,317.48 556.60,316.42 557.50,316.10 558.40,313.08 559.30,313.71 560.20,317.07 561.10,321.38 562.00,323.11 562.90,327.40 563.77,326.14 564.63,331.80 565.50,332.05 566.40,335.22 567.30,332.82 568.20,334.61 569.10,336.12 570.00,339.77 570.90,339.45 571.80,342.10 572.70,341.23 573.60,345.67 574.50,347.52 575.40,352.94 576.30,357.91 577.20,358.79 578.10,359.35 579.00,367.32 579.90,363.22 580.80,369.70 581.70,371.08 582.60,369.58 583.50,371.83 584.40,367.44 585.30,368.64 586.17,368.02 587.05,368.19 587.92,366.05 588.80,368.51 589.70,360.98 590.60,357.66 591.50,352.21 592.40,348.24 593.30,341.69 594.20,333.97 595.10,328.22 596.00,323.18 596.90,326.22 597.80,323.74 598.70,321.01 599.60,323.09 600.50,323.74 601.40,324.85 602.30,321.54 603.20,326.16 604.10,327.12 605.00,329.13 605.90,330.01 606.80,328.11 607.70,331.09 608.60,329.12 609.50,335.70 610.37,331.60 611.23,336.72 612.10,335.10 613.30,340.45" fill="none" stroke="#3d9a41" stroke-width="1.1"/>
<polyline points="46.50,363.87 47.40,364.83 48.30,365.20 49.20,364.29 50.10,363.80 51.00,364.56 51.90,364.89 52.80,365.26 53.70,363.87 54.60,363.82 55.50,365.02 56.40,364.88 57.30,365.52 58.20,365.19 59.10,364.54 60.00,364.44 60.90,366.14 61.80,364.43 62.70,364.13 63.60,363.92 64.50,364.66 65.40,364.69 66.30,364.39 67.20,364.56 68.10,364.76 69.00,365.02 69.90,365.26 70.80,364.73 71.70,363.53 72.60,365.02 73.50,363.75 74.40,364.50 75.30,363.72 76.20,364.60 77.10,364.13 78.00,364.73 78.90,366.58 79.80,364.57 80.70,365.11 81.60,363.81 82.50,364.43 83.40,365.00 84.30,364.54 85.20,364.82 86.10,364.66 87.00,364.00 87.90,364.94 88.80,364.11 89.70,365.72 90.60,364.30 91.50,365.01 92.40,364.60 93.30,365.17 94.20,364.24 95.10,365.20 96.00,364.53 96.90,365.36 97.80,364.97 98.70,364.68 99.60,364.13 100.50,365.06 101.40,364.88 102.30,365.59 103.20,364.37 104.10,364.93 105.00,364.90 105.90,364.77 106.80,364.73 107.70,364.71 108.60,364.24 109.50,363.99 110.40,364.36 111.30,364.95 112.20,365.51 113.10,365.19 114.00,365.23 114.90,365.07 115.80,365.02 116.70,364.71 117.60,365.06 118.50,365.66 119.40,364.40 120.30,363.18 121.20,364.78 122.10,363.75 123.00,364.18 123.90,364.12 124.80,362.92 125.70,365.06 126.60,364.67 127.50,363.71 128.40,364.05 129.30,363.68 130.20,363.07 131.10,363.53 132.00,363.82 132.90,364.27 133.80,364.03 134.70,363.64 135.60,364.41 136.50,363.14 137.40,364.08 138.30,364.27 139.20,363.42 140.10,362.53 141.00,363.06 141.90,363.74 142.80,363.92 143.70,364.53 144.60,363.00 145.50,363.60 146.40,363.99 147.30,363.51 148.20,362.18 149.10,364.08 150.00,364.99 150.90,364.20 151.80,363.05 152.70,364.35 153.60,364.73 154.50,366.09 155.40,366.97 156.30,366.67 157.20,367.53 158.10,366.55 159.00,367.72 159.90,366.19 160.80,366.32 161.70,367.03 162.60,367.45 163.50,366.99 164.40,366.78 165.30,365.51 166.20,366.17 167.10,366.23 168.00,366.28 168.90,366.95 169.80,366.40 170.70,367.07 171.60,366.65 172.50,366.40 173.40,366.67 174.30,366.86 175.20,367.11 176.10,366.31 177.00,366.46 177.90,365.78 178.80,365.56 179.70,365.47 180.60,364.49 181.50,364.31 182.40,363.86 183.30,364.70 184.20,364.72 185.10,365.91 186.00,364.75 186.90,364.13 187.80,363.13 188.70,365.45 189.60,364.71 190.50,363.63 191.40,364.71 192.30,363.63 193.20,366.69 194.10,365.27 195.00,364.94 195.90,364.49 196.80,363.32 197.70,364.52 198.60,363.67 199.50,364.96 200.40,363.32 201.30,364.06 202.20,365.33 203.10,365.59 204.00,363.89 204.90,363.68 205.80,365.13 206.70,365.11 207.60,364.01 208.50,364.18 209.40,364.18 210.30,363.89 211.20,364.19 212.10,365.35 213.00,365.01 213.90,365.83 214.80,364.55 215.70,364.52 216.60,364.01 217.50,364.53 218.40,363.81 219.30,363.53 220.20,365.02 221.10,365.46 222.00,365.10 222.90,365.40 223.80,364.75 224.70,364.17 225.60,364.65 226.50,364.38 227.40,363.93 228.30,363.58 229.20,363.71 230.10,364.60 231.00,364.69 231.90,364.32 232.80,365.46 233.70,364.71 234.60,364.95 235.50,365.33 236.40,364.11 237.30,363.42 238.20,365.05 239.10,364.19 240.00,365.39 240.90,364.80 241.80,365.20 242.70,365.06 243.60,363.35 244.50,365.03 245.40,364.20 246.30,364.15 247.20,364.34 248.10,365.06 249.00,365.13 249.90,365.21 250.80,363.60 251.70,364.25 252.60,363.17 253.50,364.54 254.40,364.96 255.30,364.14 256.20,364.75 257.10,364.74 258.00,365.20 258.90,364.11 259.80,364.10 260.70,364.14 261.60,365.65 262.50,365.25 263.40,364.53 264.30,364.74 265.20,364.67 266.10,364.72 267.00,364.47 267.90,364.40 268.80,363.85 269.70,364.21 270.60,365.59 271.50,364.92 272.40,364.64 273.30,364.47 274.20,364.64 275.10,364.81 276.00,364.21 276.90,364.72 277.80,364.74 278.70,364.15 279.60,364.13 280.50,364.00 281.40,363.96 282.30,365.13 283.20,363.18 284.10,364.44 285.00,364.23 285.90,364.23 286.80,364.66 287.70,365.28 288.60,364.65 289.50,364.52 290.40,364.23 291.30,364.52 292.20,365.15 293.10,364.36 294.00,363.91 294.90,363.84 295.80,363.94 296.70,363.77 297.60,365.26 298.50,364.81 299.40,364.46 300.30,365.48 301.20,364.21 302.10,365.05 303.00,365.08 303.90,363.67 304.80,363.67 305.70,364.04 306.60,365.14 307.50,365.38 308.40,363.86 309.30,365.23 310.20,364.37 311.10,364.36 312.00,364.27 312.90,364.41 313.80,363.51 314.70,364.00 315.60,363.86 316.50,364.89 317.40,365.85 318.30,366.24 319.20,364.40 320.10,363.57 321.00,364.36 321.90,364.04 322.80,365.79 323.70,364.94 324.60,364.16 325.50,365.16 326.40,364.92 327.30,363.62 328.20,364.28 329.10,364.46 330.00,364.61 330.90,364.68 331.80,364.40 332.70,364.71 333.60,364.25 334.50,364.06 335.40,365.51 336.30,364.82 337.20,364.86 338.10,363.64 339.00,364.50 339.90,365.09 340.80,363.83 341.70,365.26 342.60,364.37 343.50,364.84 344.40,364.52 345.30,364.73 346.20,365.32 347.10,364.36 348.00,365.54 348.90,364.13 349.80,364.04 350.70,365.03 351.60,363.96 352.50,364.38 353.40,365.14 354.30,365.33 355.20,363.54 356.10,364.90 357.00,365.73 357.90,365.32 358.80,364.46 359.70,364.24 360.60,364.42 361.50,363.91 362.40,364.44 363.30,364.49 364.20,364.51 365.10,365.31 366.00,364.46 366.90,363.73 367.80,365.23 368.70,363.96 369.60,364.33 370.50,364.52 371.40,364.39 372.30,364.00 373.20,364.45 374.10,365.91 375.00,364.24 375.90,364.52 376.80,365.27 377.70,365.05 378.60,365.06 379.50,365.12 380.40,363.42 381.30,364.08 382.20,364.68 383.10,364.90 384.00,365.38 384.90,364.88 385.80,364.46 386.70,364.62 387.60,364.47 388.50,364.75 389.40,365.00 390.30,364.40 391.20,364.11 392.10,364.09 393.00,365.26 393.90,365.37 394.80,365.20 395.70,365.11 396.60,365.10 397.50,364.60 398.40,365.00 399.30,363.97 400.20,364.48 401.10,364.16 402.00,365.04 402.90,364.25 403.80,364.54 404.70,364.84 405.60,365.41 406.50,364.12 407.40,364.04 408.30,365.09 409.20,363.94 410.10,364.87 411.00,364.26 411.90,364.54 412.80,363.51 413.70,365.03 414.60,364.30 415.50,364.06 416.40,365.85 417.30,365.03 418.20,366.71 419.10,364.84 420.00,364.39 420.90,364.66 421.80,365.56 422.70,364.58 423.60,364.87 424.50,364.91 425.40,364.05 426.30,364.68 427.20,364.30 428.10,364.64 429.00,367.00 429.90,365.50 430.80,364.64 431.70,364.06 432.60,363.40 433.50,364.89 434.40,364.54 435.30,363.59 436.20,364.56 437.10,363.69 438.00,364.58 438.90,364.69 439.80,364.81 440.70,364.73 441.60,364.70 442.50,363.92 443.40,364.37 444.30,364.29 445.20,364.46 446.10,364.76 447.00,364.97 447.90,365.58 448.80,363.06 449.70,364.84 450.60,364.48 451.50,365.97 452.40,365.16 453.30,363.61 454.20,364.84 455.10,364.29 456.00,365.20 456.90,363.97 457.80,364.54 458.70,364.52 459.60,364.54 460.50,364.25 461.40,363.50 462.30,364.88 463.20,365.20 464.10,364.56 465.00,363.99 465.90,364.72 466.80,364.94 467.70,364.49 468.60,364.59 469.50,365.45 470.40,363.93 471.30,364.27 472.20,363.46 473.10,364.18 474.00,364.16 474.90,364.02 475.80,364.18 476.70,365.68 477.60,364.48 478.50,364.53 479.40,365.92 480.30,364.56 481.20,363.56 482.10,364.84 483.00,364.04 483.90,365.58 484.80,363.85 485.70,364.25 486.60,363.64 487.50,364.66 488.40,363.99 489.30,364.56 490.20,364.37 491.10,364.23 492.00,365.17 492.90,365.16 493.80,364.64 494.70,364.06 495.60,363.96 496.50,364.76 497.40,366.03 498.30,364.33 499.20,364.13 500.10,364.18 501.00,363.94 501.90,364.02 502.80,364.48 503.70,365.46 504.60,364.60 505.50,364.29 506.40,363.63 507.30,364.73 508.20,364.58 509.10,363.86 510.00,363.95 510.90,364.57 511.80,365.21 512.70,364.98 513.60,364.72 514.50,364.41 515.40,364.79 516.30,364.59 517.20,365.90 518.10,363.92 519.00,364.38 519.90,365.36 520.80,364.44 521.70,365.45 522.60,364.57 523.50,364.69 524.40,364.38 525.30,363.77 526.20,364.02 527.10,365.93 528.00,364.99 528.90,364.96 529.80,365.17 530.70,364.94 531.60,365.21 532.50,362.70 533.40,354.87 534.30,361.46 535.20,364.39 536.10,363.80 537.00,364.46 537.90,364.27 538.80,364.97 539.70,364.17 540.60,363.96 541.50,364.40 542.40,365.53 543.30,364.57 544.20,364.70 545.10,364.61 546.00,364.78 546.90,365.16 547.80,365.44 548.70,363.61 549.60,365.42 550.50,364.60 551.40,364.41 552.30,366.04 553.20,364.50 554.10,365.77 555.00,365.18 555.90,363.98 556.80,364.89 557.70,365.04 558.60,364.52 559.50,363.20 560.40,364.39 561.30,364.49 562.20,363.94 563.10,365.70 564.00,364.45 564.90,364.36 565.80,364.42 566.70,364.13 567.60,364.13 568.50,364.66 569.40,364.79 570.30,364.30 571.20,364.55 572.10,363.77 573.00,364.91 573.90,364.15 574.80,364.73 575.70,364.06 576.60,364.29 577.50,364.73 578.40,363.87 579.30,366.08 580.20,364.58 581.10,364.56 582.00,364.16 582.90,365.56 583.80,365.43 584.70,364.78 585.60,363.78 586.50,364.30 587.40,364.97 588.30,364.29 589.20,363.89 590.10,363.89 591.00,364.14 591.90,364.61 592.80,364.21 593.70,364.61 594.60,366.28 595.50,365.66 596.40,363.98 597.30,364.81 598.20,364.65 599.10,364.52 600.00,365.23 600.90,364.40 601.80,364.40 602.70,364.38 603.60,364.54 604.50,365.37 605.40,365.07 606.30,363.80 607.20,364.33 608.10,364.12 609.00,365.09 609.90,364.73 610.80,365.13 611.70,364.56 612.60,363.45" fill="none" stroke="#e2261f" stroke-width="1.25"/>
<path d="M49.6 359.5L50 344L51.3 343.4L52.3 345L52.6 360Z" fill="#e3222a"/>
<path d="M152 364L152.8 353.5L154 352.8L155 357L155.6 366.5Z" fill="#e3222a"/>
<line x1="46.5" y1="277.24" x2="46.5" y2="375.25" stroke="#6e7079" stroke-width="1"/>
<line x1="46.5" y1="374.75" x2="613.5" y2="374.75" stroke="#6e7079" stroke-width="0.8" stroke-dasharray="1.2,1.2"/>
<line x1="43.5" y1="374.75" x2="46.5" y2="374.75" stroke="#6e7079" stroke-width="0.9"/>
<line x1="43.5" y1="360.82" x2="46.5" y2="360.82" stroke="#6e7079" stroke-width="0.9"/>
<line x1="43.5" y1="346.89" x2="46.5" y2="346.89" stroke="#6e7079" stroke-width="0.9"/>
<line x1="43.5" y1="332.96" x2="46.5" y2="332.96" stroke="#6e7079" stroke-width="0.9"/>
<line x1="43.5" y1="319.03" x2="46.5" y2="319.03" stroke="#6e7079" stroke-width="0.9"/>
<line x1="43.5" y1="305.10" x2="46.5" y2="305.10" stroke="#6e7079" stroke-width="0.9"/>
<line x1="43.5" y1="291.17" x2="46.5" y2="291.17" stroke="#6e7079" stroke-width="0.9"/>
<line x1="43.5" y1="277.24" x2="46.5" y2="277.24" stroke="#6e7079" stroke-width="0.9"/>
<line x1="46.5" y1="374.75" x2="46.5" y2="377.75" stroke="#6e7079" stroke-width="0.9"/>
<line x1="121.5" y1="374.75" x2="121.5" y2="377.75" stroke="#6e7079" stroke-width="0.9"/>
<line x1="196.5" y1="374.75" x2="196.5" y2="377.75" stroke="#6e7079" stroke-width="0.9"/>
<line x1="271.5" y1="374.75" x2="271.5" y2="377.75" stroke="#6e7079" stroke-width="0.9"/>
<line x1="346.5" y1="374.75" x2="346.5" y2="377.75" stroke="#6e7079" stroke-width="0.9"/>
<line x1="421.5" y1="374.75" x2="421.5" y2="377.75" stroke="#6e7079" stroke-width="0.9"/>
<line x1="496.5" y1="374.75" x2="496.5" y2="377.75" stroke="#6e7079" stroke-width="0.9"/>
<line x1="571.5" y1="374.75" x2="571.5" y2="377.75" stroke="#6e7079" stroke-width="0.9"/>
</svg>

<!-- y labels -->
<div class="a ylab" style="left:11.8px;top:273.3px">7,000</div>
<div class="a ylab" style="left:11.8px;top:287.2px">6,000</div>
<div class="a ylab" style="left:11.8px;top:301.1px">5,000</div>
<div class="a ylab" style="left:11.8px;top:315px">4,000</div>
<div class="a ylab" style="left:11.8px;top:329px">3,000</div>
<div class="a ylab" style="left:11.8px;top:343px">2,000</div>
<div class="a ylab" style="left:11.8px;top:356.8px">1,000</div>
<div class="a ylab" style="left:11.8px;top:370.8px">0</div>
<!-- x labels -->
<div class="a xlab" style="left:21.25px;top:377.6px">6/10/2020, 00:00:00</div>
<div class="a xlab" style="left:92.75px;top:377.6px">06/11/2020, 10:50:00</div>
<div class="a xlab" style="left:167.75px;top:377.6px">06/12/2020, 21:40:00</div>
<div class="a xlab" style="left:242.75px;top:377.6px">06/14/2020, 08:30:00</div>
<div class="a xlab" style="left:317.75px;top:377.6px">06/15/2020, 19:20:00</div>
<div class="a xlab" style="left:392.75px;top:377.6px">06/17/2020, 06:10:00</div>
<div class="a xlab" style="left:467.75px;top:377.6px">06/18/2020, 17:00:00</div>
<div class="a xlab" style="left:542.75px;top:377.6px">06/20/2020, 03:50:00</div>
<!-- legend -->
<svg class="a" style="left:255px;top:245px" width="130" height="14">
<g fill="#fff" stroke-width="1">
<line x1="5" y1="7" x2="18" y2="7" stroke="#7cc47f"/><circle cx="11.5" cy="6.9" r="3.2" stroke="#6cba6f"/>
<line x1="45" y1="7" x2="58" y2="7" stroke="#e98b8b"/><circle cx="51.5" cy="6.9" r="3.2" stroke="#df6b6b"/>
<line x1="91.2" y1="7" x2="104.4" y2="7" stroke="#ecc46a"/><circle cx="97.5" cy="6.9" r="3.2" stroke="#e8b84a"/>
</g></svg>
<div class="a leg" style="left:275.8px;top:249px">Human</div>
<div class="a leg" style="left:315.6px;top:249px">Malicious</div>
<div class="a leg" style="left:361.9px;top:249px">Benign</div>
<!-- toolbox -->
<svg class="a" style="left:520px;top:245px" width="100" height="16" fill="none" stroke-width="0.9">
<g stroke="#5b78ad">
<path d="M6.4 4.8V13.6H12.9V6.7H4.8"/>
<path d="M20.6 6.4H25.75V13.6H18.6V6.4"/>
<path d="M18.6 8.2L19.8 6.1L21.2 7.6"/>
<path d="M31.1 9.4A4.3 4.3 0 0 1 38.9 6.9M39.7 9.0A4.3 4.3 0 0 1 31.9 11.5"/>
<path d="M37.4 6.4L39.1 7.2L39.6 5.4M30.8 13.2L31.7 11.3L33.6 11.9" stroke-width="0.8"/>
</g>
<path d="M45.6 7.2L49.7 5.2L53.8 7.2V11.4L49.7 13.3L45.6 11.4Z" fill="#2d4fa3"/>
<path d="M45.6 7.2L49.7 5.2L53.8 7.2L49.7 9.2Z" fill="#7d8fb8"/>
<path d="M46.8 9.2L48.2 12M49.7 9.4V12.6M52.6 9.2L51.2 12" stroke="#8a5fd6" stroke-width="0.8"/>
<g fill="#a9c6ea"><rect x="59.2" y="5.2" width="4.2" height="4.2" rx="0.5"/><rect x="64.1" y="5.2" width="4.2" height="4.2" rx="0.5"/><rect x="59.2" y="9.6" width="4.2" height="4.2" rx="0.5"/><rect x="64.1" y="9.6" width="4.2" height="4.2" rx="0.5"/></g>
<path d="M74.2 9.6L75.8 8.8L76.8 5.6L77.8 10.8L79 9.2L80 10.2H81.9M74.2 12.9H81.9" stroke="#5c74a6" stroke-width="0.8"/>
<g fill="#8ea3c7"><rect x="88.2" y="10" width="1.8" height="3.8"/><rect x="90.4" y="8.4" width="1.8" height="5.4"/><rect x="92.6" y="6.8" width="1.8" height="7"/><rect x="94.6" y="5.2" width="1.4" height="8.6"/></g>
</svg>
<!-- datazoom -->
<svg class="a" style="left:0;top:0" width="640" height="480">
<rect x="46.9" y="390.3" width="567.6" height="15.3" fill="#d8dee8" stroke="#c9d0dc" stroke-width="0.6"/>
<path id="dzshadow" fill="#c6cdd8" d="M46.9 405.6 L46.9 397.13 L47.9 397.26 L48.9 397.41 L49.9 397.54 L50.9 397.66 L51.9 397.77 L52.9 397.84 L53.9 397.85 L54.9 397.99 L55.9 398.21 L56.9 398.62 L57.9 398.99 L58.9 399.40 L59.9 399.94 L60.9 400.40 L61.9 400.94 L62.9 401.32 L63.9 401.64 L64.9 401.90 L65.9 402.11 L66.9 402.22 L67.9 402.28 L68.9 402.18 L69.9 401.80 L70.9 401.36 L71.9 400.76 L72.9 400.04 L73.9 399.28 L74.9 398.41 L75.9 397.49 L76.9 396.73 L77.9 396.05 L78.9 395.47 L79.9 394.96 L80.9 394.55 L81.9 394.26 L82.9 394.13 L83.9 394.16 L84.9 394.31 L85.9 394.53 L86.9 394.78 L87.9 395.06 L88.9 395.34 L89.9 395.58 L90.9 395.77 L91.9 395.85 L92.9 395.93 L93.9 395.98 L94.9 396.07 L95.9 396.19 L96.9 396.36 L97.9 396.59 L98.9 396.81 L99.9 397.04 L100.9 397.29 L101.9 397.53 L102.9 397.78 L103.9 397.98 L104.9 398.14 L105.9 398.33 L106.9 398.56 L107.9 398.86 L108.9 399.19 L109.9 399.52 L110.9 399.89 L111.9 400.28 L112.9 400.67 L113.9 401.01 L114.9 401.28 L115.9 401.51 L116.9 401.66 L117.9 401.75 L118.9 401.79 L119.9 401.72 L120.9 401.59 L121.9 401.31 L122.9 400.88 L123.9 400.31 L124.9 399.58 L125.9 398.80 L126.9 397.96 L127.9 397.15 L128.9 396.46 L129.9 395.86 L130.9 395.42 L131.9 395.13 L132.9 394.94 L133.9 394.82 L134.9 394.75 L135.9 394.70 L136.9 394.70 L137.9 394.72 L138.9 394.79 L139.9 394.92 L140.9 395.09 L141.9 395.27 L142.9 395.46 L143.9 395.65 L144.9 395.83 L145.9 395.98 L146.9 396.11 L147.9 396.26 L148.9 396.44 L149.9 396.59 L150.9 396.76 L151.9 396.92 L152.9 397.07 L153.9 397.25 L154.9 397.40 L155.9 397.51 L156.9 397.64 L157.9 397.83 L158.9 398.08 L159.9 398.37 L160.9 398.68 L161.9 399.05 L162.9 399.44 L163.9 399.83 L164.9 400.21 L165.9 400.57 L166.9 400.91 L167.9 401.24 L168.9 401.49 L169.9 401.68 L170.9 401.84 L171.9 401.80 L172.9 401.64 L173.9 401.26 L174.9 400.63 L175.9 399.85 L176.9 398.86 L177.9 397.81 L178.9 396.73 L179.9 395.74 L180.9 394.88 L181.9 394.22 L182.9 393.77 L183.9 393.56 L184.9 393.53 L185.9 393.59 L186.9 393.76 L187.9 393.96 L188.9 394.20 L189.9 394.43 L190.9 394.66 L191.9 394.87 L192.9 395.08 L193.9 395.29 L194.9 395.50 L195.9 395.71 L196.9 395.93 L197.9 396.17 L198.9 396.44 L199.9 396.72 L200.9 397.03 L201.9 397.33 L202.9 397.62 L203.9 397.91 L204.9 398.18 L205.9 398.44 L206.9 398.69 L207.9 398.93 L208.9 399.17 L209.9 399.43 L210.9 399.71 L211.9 400.00 L212.9 400.31 L213.9 400.61 L214.9 400.92 L215.9 401.22 L216.9 401.50 L217.9 401.77 L218.9 402.00 L219.9 402.19 L220.9 402.32 L221.9 402.40 L222.9 402.43 L223.9 402.39 L224.9 402.25 L225.9 402.00 L226.9 401.62 L227.9 401.05 L228.9 400.43 L229.9 399.77 L230.9 399.08 L231.9 398.43 L232.9 397.79 L233.9 397.25 L234.9 396.93 L235.9 396.69 L236.9 396.53 L237.9 396.45 L238.9 396.38 L239.9 396.39 L240.9 396.52 L241.9 396.66 L242.9 396.82 L243.9 396.98 L244.9 397.15 L245.9 397.36 L246.9 397.54 L247.9 397.69 L248.9 397.84 L249.9 397.99 L250.9 398.16 L251.9 398.34 L252.9 398.54 L253.9 398.76 L254.9 398.98 L255.9 399.19 L256.9 399.37 L257.9 399.53 L258.9 399.66 L259.9 399.81 L260.9 399.95 L261.9 400.08 L262.9 400.25 L263.9 400.44 L264.9 400.65 L265.9 400.89 L266.9 401.13 L267.9 401.38 L268.9 401.61 L269.9 401.83 L270.9 402.04 L271.9 402.23 L272.9 402.39 L273.9 402.51 L274.9 402.56 L275.9 402.55 L276.9 402.50 L277.9 402.36 L278.9 402.15 L279.9 401.81 L280.9 401.35 L281.9 400.87 L282.9 400.32 L283.9 399.78 L284.9 399.27 L285.9 398.80 L286.9 398.45 L287.9 398.22 L288.9 398.07 L289.9 398.02 L290.9 398.00 L291.9 398.03 L292.9 398.06 L293.9 398.10 L294.9 398.16 L295.9 398.24 L296.9 398.33 L297.9 398.41 L298.9 398.48 L299.9 398.55 L300.9 398.63 L301.9 398.68 L302.9 398.73 L303.9 398.76 L304.9 398.80 L305.9 398.83 L306.9 398.86 L307.9 398.89 L308.9 398.93 L309.9 398.98 L310.9 399.08 L311.9 399.22 L312.9 399.40 L313.9 399.64 L314.9 399.93 L315.9 400.24 L316.9 400.58 L317.9 400.91 L318.9 401.21 L319.9 401.49 L320.9 401.74 L321.9 401.94 L322.9 402.09 L323.9 402.21 L324.9 402.28 L325.9 402.26 L326.9 402.14 L327.9 401.88 L328.9 401.53 L329.9 400.97 L330.9 400.24 L331.9 399.39 L332.9 398.45 L333.9 397.52 L334.9 396.62 L335.9 395.80 L336.9 395.13 L337.9 394.59 L338.9 394.21 L339.9 393.92 L340.9 393.76 L341.9 393.69 L342.9 393.73 L343.9 393.79 L344.9 393.87 L345.9 394.04 L346.9 394.25 L347.9 394.49 L348.9 394.73 L349.9 394.92 L350.9 395.11 L351.9 395.31 L352.9 395.49 L353.9 395.66 L354.9 395.80 L355.9 395.98 L356.9 396.20 L357.9 396.41 L358.9 396.64 L359.9 396.85 L360.9 397.09 L361.9 397.37 L362.9 397.66 L363.9 397.96 L364.9 398.30 L365.9 398.68 L366.9 399.09 L367.9 399.56 L368.9 400.04 L369.9 400.52 L370.9 400.98 L371.9 401.36 L372.9 401.71 L373.9 402.02 L374.9 402.20 L375.9 402.32 L376.9 402.39 L377.9 402.34 L378.9 402.20 L379.9 402.01 L380.9 401.63 L381.9 401.15 L382.9 400.57 L383.9 399.87 L384.9 399.08 L385.9 398.28 L386.9 397.48 L387.9 396.77 L388.9 396.15 L389.9 395.60 L390.9 395.20 L391.9 394.90 L392.9 394.71 L393.9 394.58 L394.9 394.50 L395.9 394.47 L396.9 394.50 L397.9 394.56 L398.9 394.66 L399.9 394.75 L400.9 394.85 L401.9 395.01 L402.9 395.19 L403.9 395.41 L404.9 395.66 L405.9 395.94 L406.9 396.25 L407.9 396.60 L408.9 396.93 L409.9 397.24 L410.9 397.51 L411.9 397.77 L412.9 397.99 L413.9 398.21 L414.9 398.45 L415.9 398.72 L416.9 399.01 L417.9 399.33 L418.9 399.71 L419.9 400.09 L420.9 400.48 L421.9 400.88 L422.9 401.22 L423.9 401.54 L424.9 401.82 L425.9 402.00 L426.9 402.14 L427.9 402.24 L428.9 402.27 L429.9 402.17 L430.9 401.98 L431.9 401.65 L432.9 401.18 L433.9 400.63 L434.9 399.97 L435.9 399.21 L436.9 398.46 L437.9 397.72 L438.9 397.00 L439.9 396.41 L440.9 395.96 L441.9 395.67 L442.9 395.40 L443.9 395.19 L444.9 395.18 L445.9 395.23 L446.9 395.37 L447.9 395.52 L448.9 395.61 L449.9 395.73 L450.9 395.93 L451.9 396.09 L452.9 396.19 L453.9 396.27 L454.9 396.34 L455.9 396.41 L456.9 396.49 L457.9 396.61 L458.9 396.77 L459.9 396.94 L460.9 397.13 L461.9 397.33 L462.9 397.55 L463.9 397.81 L464.9 398.06 L465.9 398.32 L466.9 398.58 L467.9 398.85 L468.9 399.15 L469.9 399.47 L470.9 399.79 L471.9 400.11 L472.9 400.44 L473.9 400.76 L474.9 401.09 L475.9 401.39 L476.9 401.67 L477.9 401.91 L478.9 402.10 L479.9 402.23 L480.9 402.27 L481.9 402.22 L482.9 402.04 L483.9 401.70 L484.9 401.17 L485.9 400.45 L486.9 399.68 L487.9 398.82 L488.9 397.96 L489.9 397.18 L490.9 396.49 L491.9 395.98 L492.9 395.66 L493.9 395.50 L494.9 395.48 L495.9 395.51 L496.9 395.63 L497.9 395.76 L498.9 395.90 L499.9 396.02 L500.9 396.12 L501.9 396.16 L502.9 396.19 L503.9 396.23 L504.9 396.28 L505.9 396.34 L506.9 396.40 L507.9 396.52 L508.9 396.68 L509.9 396.87 L510.9 397.07 L511.9 397.27 L512.9 397.48 L513.9 397.70 L514.9 397.93 L515.9 398.17 L516.9 398.42 L517.9 398.66 L518.9 398.92 L519.9 399.18 L520.9 399.46 L521.9 399.74 L522.9 400.04 L523.9 400.34 L524.9 400.65 L525.9 400.95 L526.9 401.24 L527.9 401.51 L528.9 401.74 L529.9 401.92 L530.9 402.04 L531.9 402.10 L532.9 402.06 L533.9 401.94 L534.9 401.65 L535.9 401.20 L536.9 400.60 L537.9 399.82 L538.9 399.00 L539.9 398.11 L540.9 397.22 L541.9 396.45 L542.9 395.73 L543.9 395.16 L544.9 394.83 L545.9 394.63 L546.9 394.60 L547.9 394.65 L548.9 394.73 L549.9 394.88 L550.9 395.13 L551.9 395.38 L552.9 395.60 L553.9 395.75 L554.9 395.88 L555.9 396.01 L556.9 396.12 L557.9 396.26 L558.9 396.42 L559.9 396.61 L560.9 396.82 L561.9 397.06 L562.9 397.34 L563.9 397.60 L564.9 397.86 L565.9 398.09 L566.9 398.25 L567.9 398.42 L568.9 398.63 L569.9 398.86 L570.9 399.12 L571.9 399.42 L572.9 399.75 L573.9 400.09 L574.9 400.48 L575.9 400.85 L576.9 401.19 L577.9 401.52 L578.9 401.82 L579.9 402.06 L580.9 402.26 L581.9 402.42 L582.9 402.51 L583.9 402.56 L584.9 402.55 L585.9 402.47 L586.9 402.32 L587.9 402.10 L588.9 401.78 L589.9 401.34 L590.9 400.80 L591.9 400.22 L592.9 399.58 L593.9 398.96 L594.9 398.36 L595.9 397.83 L596.9 397.48 L597.9 397.24 L598.9 397.09 L599.9 397.07 L600.9 397.09 L601.9 397.16 L602.9 397.29 L603.9 397.42 L604.9 397.55 L605.9 397.69 L606.9 397.83 L607.9 397.99 L608.9 398.16 L609.9 398.38 L610.9 398.58 L611.9 398.78 L612.9 398.94 L613.5 405.6Z"/>
<rect x="46.2" y="394.4" width="3.2" height="6.4" rx="0.6" fill="#aac0e0" stroke="#8aa6d2" stroke-width="0.6"/>
<rect x="613" y="394.4" width="3.2" height="6.4" rx="0.6" fill="#aac0e0" stroke="#8aa6d2" stroke-width="0.6"/>
</svg>
</div></body></html>
